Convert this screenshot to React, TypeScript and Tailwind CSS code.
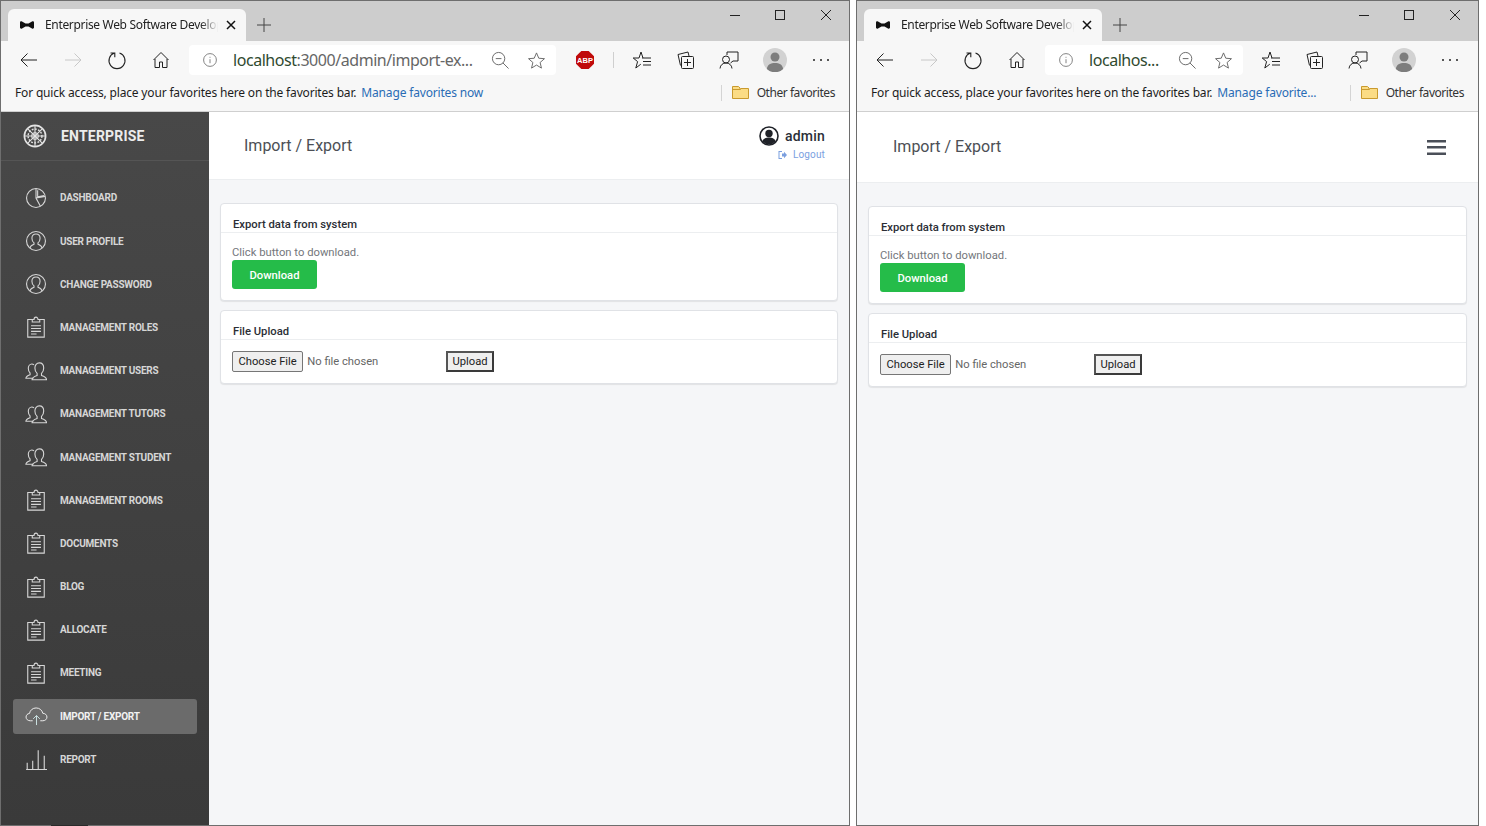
import React from 'react';

const chromeFont = "font-['Noto_Sans',sans-serif]";

const Stroke: React.FC<{ size?: number; className?: string; children: React.ReactNode }> = ({ size = 20, className = '', children }) => (
  <svg width={size} height={size} viewBox="0 0 20 20" fill="none" stroke="currentColor" strokeWidth={1} className={className}>
    {children}
  </svg>
);

const PieIcon = () => (
  <Stroke size={22}>
    <circle cx="10" cy="10" r="8.6" />
    <path d="M10 1.4V10l4 7.6M10 10l8.4-1.5M11.5 3v5.8l6-1" />
  </Stroke>
);
const UserIcon = () => (
  <Stroke size={22}>
    <circle cx="10" cy="10" r="8.6" />
    <path d="M4.5 16.4c.3-2 1.5-2.6 3.7-3.4v-1.3C6.8 10.7 6.3 9 6.3 7.4 6.3 5 7.9 3.6 10 3.6s3.7 1.4 3.7 3.8c0 1.6-.5 3.300-1.900 4.300V13c2.200.8 3.400 1.400 3.700 3.400" />
  </Stroke>
);
const ClipboardIcon = () => (
  <Stroke size={22}>
    <path d="M6.6 3.2H2.500v16h15v-16h-4.100M6.6 3.200v2.300h6.800V3.200h-1.600C11.800 2 11 1 10 1s-1.800 1-1.800 2.200z" />
    <path d="M5.500 8.800h9M5.500 11.400h9M5.500 14h9M5.500 16.400h5" />
  </Stroke>
);
const UsersIcon = () => (
  <Stroke size={22}>
    <path d="M7.600 16.600H.8c0-1.600 1-2.200 3.800-3.200v-1.600C3.400 10.800 3 9.200 3 7.600 3 5.400 4.400 3.600 6.200 3.600c.8 0 1.400.3 2 .8" />
    <path d="M19.600 18H6.400c0-2 1.200-2.700 4.600-3.900v-1.900C9.600 11 9 9.200 9 7.200 9 4.600 10.600 2.600 13 2.600s4 2 4 4.600c0 2-.6 3.800-2 5v1.900c3.400 1.200 4.600 1.900 4.600 3.900z" />
  </Stroke>
);
const CloudIcon = () => (
  <svg width="23" height="19" viewBox="0 0 24 20" fill="none" stroke="currentColor" strokeWidth={1}>
    <path d="M8 14.500H5.500C2.800 14.500 1 12.800 1 10.600c0-2 1.500-3.600 3.600-3.800C5.200 3.400 8 1 11.600 1c3.600 0 6.400 2.400 7 5.600 2.600.1 4.400 1.900 4.400 4 0 2.200-1.800 3.900-4.400 3.900H16" />
    <path d="M12 19V9M8.500 12.500 12 9l3.500 3.500" stroke="#cfe6e6" />
  </svg>
);
const BarsIcon = () => (
  <Stroke size={22}>
    <path d="M1 19.500h19M2 19.500v-6M7 19.500v-8M12 19.500V2M17.500 19.500V7" />
  </Stroke>
);

const navItems: { label: string; icon: React.ReactNode; active?: boolean }[] = [
  { label: 'Dashboard', icon: <PieIcon /> },
  { label: 'User Profile', icon: <UserIcon /> },
  { label: 'Change Password', icon: <UserIcon /> },
  { label: 'Management Roles', icon: <ClipboardIcon /> },
  { label: 'Management Users', icon: <UsersIcon /> },
  { label: 'Management Tutors', icon: <UsersIcon /> },
  { label: 'Management Student', icon: <UsersIcon /> },
  { label: 'Management Rooms', icon: <ClipboardIcon /> },
  { label: 'Documents', icon: <ClipboardIcon /> },
  { label: 'Blog', icon: <ClipboardIcon /> },
  { label: 'Allocate', icon: <ClipboardIcon /> },
  { label: 'Meeting', icon: <ClipboardIcon /> },
  { label: 'Import / Export', icon: <CloudIcon />, active: true },
  { label: 'Report', icon: <BarsIcon /> },
];

const Logo = () => (
  <svg width="24" height="24" viewBox="0 0 26 26" fill="none" stroke="#e4e4e4">
    <circle cx="13" cy="13" r="11.500" strokeWidth={1.800} />
    <circle cx="13" cy="13" r="3.500" strokeWidth={1.200} />
    <path d="M13 1.500v23M1.500 13h23M4.900 4.900l16.200 16.200M21.100 4.900 4.900 21.100" strokeWidth={1.200} />
    <circle cx="13" cy="13" r="7.500" strokeWidth={1.500} strokeDasharray="2 1.500" />
  </svg>
);

const Sidebar = () => (
  <aside className="w-[208px] shrink-0 flex flex-col bg-gradient-to-b from-[#484848] to-[#3a3a3a] font-['Roboto',sans-serif]">
    <div className="h-[49px] shrink-0 flex items-center pl-[22px] gap-[14px] border-b border-[#555555]">
      <Logo />
      <span className="text-[14px] font-bold tracking-[0.2px] text-[#ececec]">ENTERPRISE</span>
    </div>
    <nav className="flex flex-col gap-[8.2px] pt-[19.4px] px-3">
      {navItems.map(item => (
        <a
          key={item.label}
          className={`h-[35px] flex items-center rounded-[3px] ${item.active ? 'bg-[#6b6b6b] text-[#f2f2f2]' : 'text-[#d6d6d6]'}`}
        >
          <span className="w-[47px] pl-[12px] shrink-0 flex items-center">{item.icon}</span>
          <span className="text-[10px] font-bold uppercase tracking-[-0.25px]">{item.label}</span>
        </a>
      ))}
    </nav>
  </aside>
);

const Card: React.FC<{ title: string; children: React.ReactNode }> = ({ title, children }) => (
  <section className="bg-white border border-[#e0e2e6] rounded-[4px] shadow-[0_1px_1px_rgba(0,0,0,0.08)]">
    <h3 className="h-[29px] pl-3 pt-[14px] text-[11.25px] leading-[14px] font-medium text-[#2b2e35] border-b border-[#eceef0]">{title}</h3>
    {children}
  </section>
);

const Panels = () => (
  <div className="flex flex-col gap-[9px] font-['Roboto',sans-serif]">
    <Card title="Export data from system">
      <div className="pl-[11px] pt-[13px] pb-[11px]">
        <p className="text-[11.25px] leading-[14px] text-[#74777c]">Click button to download.</p>
        <button className="h-[29px] w-[85px] pt-[3px] rounded-[3px] bg-[#25bc49] text-[11.25px] font-medium text-white">Download</button>
      </div>
    </Card>
    <Card title="File Upload">
      <div className="flex items-center pl-[11px] pt-[11px] pb-[11px]">
        <input
          type="file"
          className="w-[214px] text-[11.2px] text-[#666666] file:h-[21px] file:mr-1 file:px-[5.5px] file:pt-px file:border file:border-[#767676] file:rounded-[2px] file:bg-[#efefef] file:text-[#222222]"
        />
        <button className="h-[21px] px-[4.5px] pt-px border-2 border-[#3a3a3a] border-t-[#555555] border-l-[#555555] bg-[#efefef] text-[11.2px] text-[#222222]">Upload</button>
      </div>
    </Card>
  </div>
);

const Bowtie = () => (
  <svg width="14" height="8" viewBox="0 0 14 8" fill="#111111">
    <path d="M0 1.500C0 .5 1 0 2 .5L5.500 2.500h3L12 .5c1-.5 2 0 2 1v5c0 1-1 1.500-2 1L8.500 5.500h-3L2 7.500c-1 .5-2 0-2-1z" />
  </svg>
);

const FolderIcon = () => (
  <svg width="17" height="13" viewBox="0 0 17 13" fill="#fbdc85" stroke="#c99a2e">
    <path d="M.5 12.500V.5h6l2 2h8v10z" />
    <path d="M.5 3.500h8l-1-1" fill="none" />
  </svg>
);

const ToolIcons = {
  back: (
    <Stroke><path d="M18 10H2M8.500 3.500 2 10l6.500 6.500" /></Stroke>
  ),
  forward: (
    <Stroke className="text-[#c8c8c8]"><path d="M2 10h16M11.500 3.500 18 10l-6.500 6.500" /></Stroke>
  ),
  refresh: (
    <Stroke><path d="M7.500 3a8 8 0 1 0 5 0M3.500 3h4.300v4.300" strokeWidth={1.100} /></Stroke>
  ),
  home: (
    <Stroke><path d="M2.500 10 10 2.500l7.500 7.500M4 9v8.500h4.500V12h3v5.500H16V9" /></Stroke>
  ),
  collections: (
    <Stroke>
      <path d="M4.500 15.500 2 4.500l10-2.500 1 4" />
      <rect x="5.500" y="6.500" width="12" height="12" rx="1" fill="#f7f7f7" />
      <path d="M11.500 9v7M8 12.500h7" />
    </Stroke>
  ),
  favorites: (
    <Stroke>
      <path d="M9 2 11 8h-1M9 2 7 8H1.200l4.400 3.600-1.800 6.400 5-3.800" />
      <path d="M11 8h8M11 11.500h8M11 15h8" />
    </Stroke>
  ),
  feedback: (
    <Stroke>
      <path d="M8 5V2h11v9h-5l-2.500 2" />
      <circle cx="7" cy="9.500" r="3.500" />
      <path d="M1 18.500c.3-3.500 2.800-5.500 6-5.500s5.700 2 6 5.500" />
    </Stroke>
  ),
  more: (
    <svg width="20" height="4" viewBox="0 0 20 4" fill="#222222">
      <circle cx="3" cy="2" r="1" /><circle cx="10" cy="2" r="1" /><circle cx="17" cy="2" r="1" />
    </svg>
  ),
};

const Avatar = () => (
  <svg width="24" height="24" viewBox="0 0 24 24">
    <circle cx="12" cy="12" r="12" fill="#d2d2d2" />
    <circle cx="12" cy="9" r="4.500" fill="#7d7d7d" />
    <path d="M3.800 21c.7-4.500 4-6 8.200-6s7.500 1.500 8.200 6a12 12 0 0 1-16.400 0z" fill="#7d7d7d" />
  </svg>
);

const AbpIcon = () => (
  <svg width="18" height="18" viewBox="0 0 18 18">
    <polygon points="5.300,0 12.700,0 18,5.300 18,12.700 12.700,18 5.300,18 0,12.700 0,5.300" fill="#c00a0a" />
    <text x="9" y="11.800" textAnchor="middle" fontSize="7.500" fontWeight="700" fill="#ffffff" fontFamily="Liberation Sans, sans-serif">ABP</text>
  </svg>
);

const ToolButton: React.FC<{ width?: string; children: React.ReactNode }> = ({ width = 'w-[44px]', children }) => (
  <div className={`${width} h-full shrink-0 flex items-center justify-center text-[#222222]`}>{children}</div>
);

const BrowserChrome: React.FC<{ url: React.ReactNode; manage: string; abp?: boolean }> = ({ url, manage, abp }) => (
  <header className={`shrink-0 ${chromeFont}`}>
    <div className="h-[40px] bg-[#cdcdcd] flex items-end pl-[7px]">
      <div className="h-[32px] w-[238px] bg-[#f7f7f7] rounded-t-[6px] flex items-center pl-[12px] pr-[10px]">
        <Bowtie />
        <span className="ml-[11px] w-[173px] overflow-hidden whitespace-nowrap text-[12px] text-[#222222] tracking-[-0.33px] [mask-image:linear-gradient(to_right,black_90%,transparent)]">Enterprise Web Software Develop</span>
        <svg width="10" height="10" viewBox="0 0 10 10" stroke="#111111" strokeWidth={1.500} className="ml-auto"><path d="M1 1l8 8M9 1l-8 8" /></svg>
      </div>
      <div className="h-[32px] w-[36px] flex items-center justify-center text-[#444444]">
        <svg width="14" height="14" viewBox="0 0 14 14" stroke="currentColor"><path d="M7 0v14M0 7h14" /></svg>
      </div>
      <div className="ml-auto self-start h-[28px] flex items-center pr-[16px] text-[#222222]">
        <svg width="14" height="14" viewBox="0 0 14 14" stroke="currentColor" strokeWidth={1}><path d="M2 7.500h10" /></svg>
        <svg width="14" height="14" viewBox="0 0 14 14" fill="none" stroke="currentColor" strokeWidth={1} className="ml-[31px]"><rect x="2.500" y="2.500" width="9" height="9" /></svg>
        <svg width="14" height="14" viewBox="0 0 14 14" stroke="currentColor" strokeWidth={1} className="ml-[32px]"><path d="M2 2l10 10M12 2 2 12" /></svg>
      </div>
    </div>
    <div className="h-[39px] bg-[#f7f7f7] flex items-center pl-[6px] pr-[6px] pb-[1px]">
      <ToolButton>{ToolIcons.back}</ToolButton>
      <ToolButton>{ToolIcons.forward}</ToolButton>
      <ToolButton>{ToolIcons.refresh}</ToolButton>
      <ToolButton>{ToolIcons.home}</ToolButton>
      <div className="flex-1 min-w-0 h-[30px] ml-[6px] bg-white rounded-[4px] flex items-center pl-[13px] pr-[10px] text-[#666666]">
        <Stroke size={16}><circle cx="10" cy="10" r="8" /><path d="M10 9v5M10 6v1.200" /></Stroke>
        <span className="ml-[15px] text-[16px] whitespace-nowrap tracking-[-0.45px]">{url}</span>
        <span className="ml-auto flex items-center gap-[17px]">
          <Stroke size={19}><circle cx="8" cy="8" r="6.500" /><path d="M5 8h6M12.500 12.500l6 6" /></Stroke>
          <Stroke size={19}><path d="M10 2l2.400 5.600 6 .5-4.600 4 1.400 5.900-5.200-3.200-5.200 3.200 1.400-5.900-4.600-4 6-.5z" /></Stroke>
        </span>
      </div>
      {abp && (
        <>
          <ToolButton width="w-[57px]"><AbpIcon /></ToolButton>
          <div className="h-[16px] w-px bg-[#cfcfcf] shrink-0" />
        </>
      )}
      <div className="ml-[6px] flex items-center h-full">
        <ToolButton>{ToolIcons.favorites}</ToolButton>
        <ToolButton width="w-[43px]">{ToolIcons.collections}</ToolButton>
        <ToolButton>{ToolIcons.feedback}</ToolButton>
        <ToolButton width="w-[48px]"><Avatar /></ToolButton>
        <ToolButton>{ToolIcons.more}</ToolButton>
      </div>
    </div>
    <div className="h-[32px] bg-[#f7f7f7] border-b border-[#cfcfcf] flex items-center pl-[14px] pr-[14px] pb-[6px] text-[12px] tracking-[-0.17px] whitespace-nowrap text-[#1d1d1d]">
      <span>For quick access, place your favorites here on the favorites bar.</span>
      <a className="ml-[5px] text-[#2a6cb5]">{manage}</a>
      <div className="ml-auto h-[16px] w-px bg-[#d4d4d4]" />
      <span className="ml-[10px] mr-[8px] flex"><FolderIcon /></span>
      <span className="text-[#333333] tracking-[-0.45px]">Other favorites</span>
    </div>
  </header>
);

const PageTitle: React.FC<{ className: string; children?: React.ReactNode }> = ({ className, children }) => (
  <div className={`bg-white border-b border-[#eceef0] flex items-center justify-between font-['Roboto',sans-serif] ${className}`}>
    <h1 className="text-[16px] text-[#4c4f55]">Import / Export</h1>
    {children}
  </div>
);

const AdminBlock = () => (
  <div className="flex flex-col items-end pb-[6px]">
    <div className="flex items-center gap-[6px] h-[24px]">
      <svg width="20" height="20" viewBox="0 0 20 20">
        <circle cx="10" cy="10" r="9" fill="#ffffff" stroke="#1f2228" strokeWidth={1.600} />
        <circle cx="10" cy="7.500" r="3.700" fill="#1f2228" />
        <path d="M3.500 15.500c.6-3 3.200-4 6.500-4s5.900 1 6.500 4a9 9 0 0 1-13 0z" fill="#1f2228" />
      </svg>
      <span className="text-[14px] font-medium tracking-[0.2px] text-[#2b2f38]">admin</span>
    </div>
    <div className="mt-[0.5px] flex items-center gap-[6px] text-[10px] leading-[12px] tracking-[0.15px] text-[#7b9fdf]">
      <svg width="9" height="8" viewBox="0 0 9 8" fill="#7b9fdf">
        <path d="M4 0H.5v8H4V7H1.500V1H4zM4 2.500h2V.8L9 4 6 7.200V5.500H4z" />
      </svg>
      <span>Logout</span>
    </div>
  </div>
);

const Hamburger = () => (
  <svg width="19" height="15" viewBox="0 0 19 15" fill="#4a4f58" aria-label="menu">
    <rect width="19" height="2.500" y="0" />
    <rect width="19" height="2.500" y="6" />
    <rect width="19" height="2.500" y="12.500" />
  </svg>
);

const App: React.FC = () => {
  return (
    <div className="w-[1486px] h-[826px] overflow-hidden bg-white flex gap-[6px] items-start">
      {/* wide window with sidebar */}
      <div className="relative w-[850px] h-[826px] flex flex-col border border-[#6e6e6e]">
        <BrowserChrome
          abp
          manage="Manage favorites now"
          url={<><span className="text-[#2f4a2f]">localhost</span>:3000/admin/import-ex...</>}
        />
        <div className="flex-1 min-h-0 flex">
          <Sidebar />
          <main className="flex-1 bg-[#f5f6f8]">
            <PageTitle className="h-[68px] pl-[35px] pr-[24px]">
              <AdminBlock />
            </PageTitle>
            <div className="pt-[23px] px-[11px]">
              <Panels />
            </div>
          </main>
        </div>
        <div className="absolute -bottom-px left-[50px] w-[37px] h-px bg-[#2a2a2a]" />
      </div>

      {/* narrow window, sidebar collapsed */}
      <div className="w-[623px] h-[826px] flex flex-col border border-[#6e6e6e]">
        <BrowserChrome
          manage="Manage favorite..."
          url={<span className="text-[#2f4a2f]">localhos...</span>}
        />
        <main className="flex-1 bg-[#f5f6f8]">
          <PageTitle className="h-[71px] pl-[36px] pr-[32px]">
            <Hamburger />
          </PageTitle>
          <div className="pt-[23px] px-[11px]">
            <Panels />
          </div>
        </main>
      </div>
    </div>
  );
};

export default App;
